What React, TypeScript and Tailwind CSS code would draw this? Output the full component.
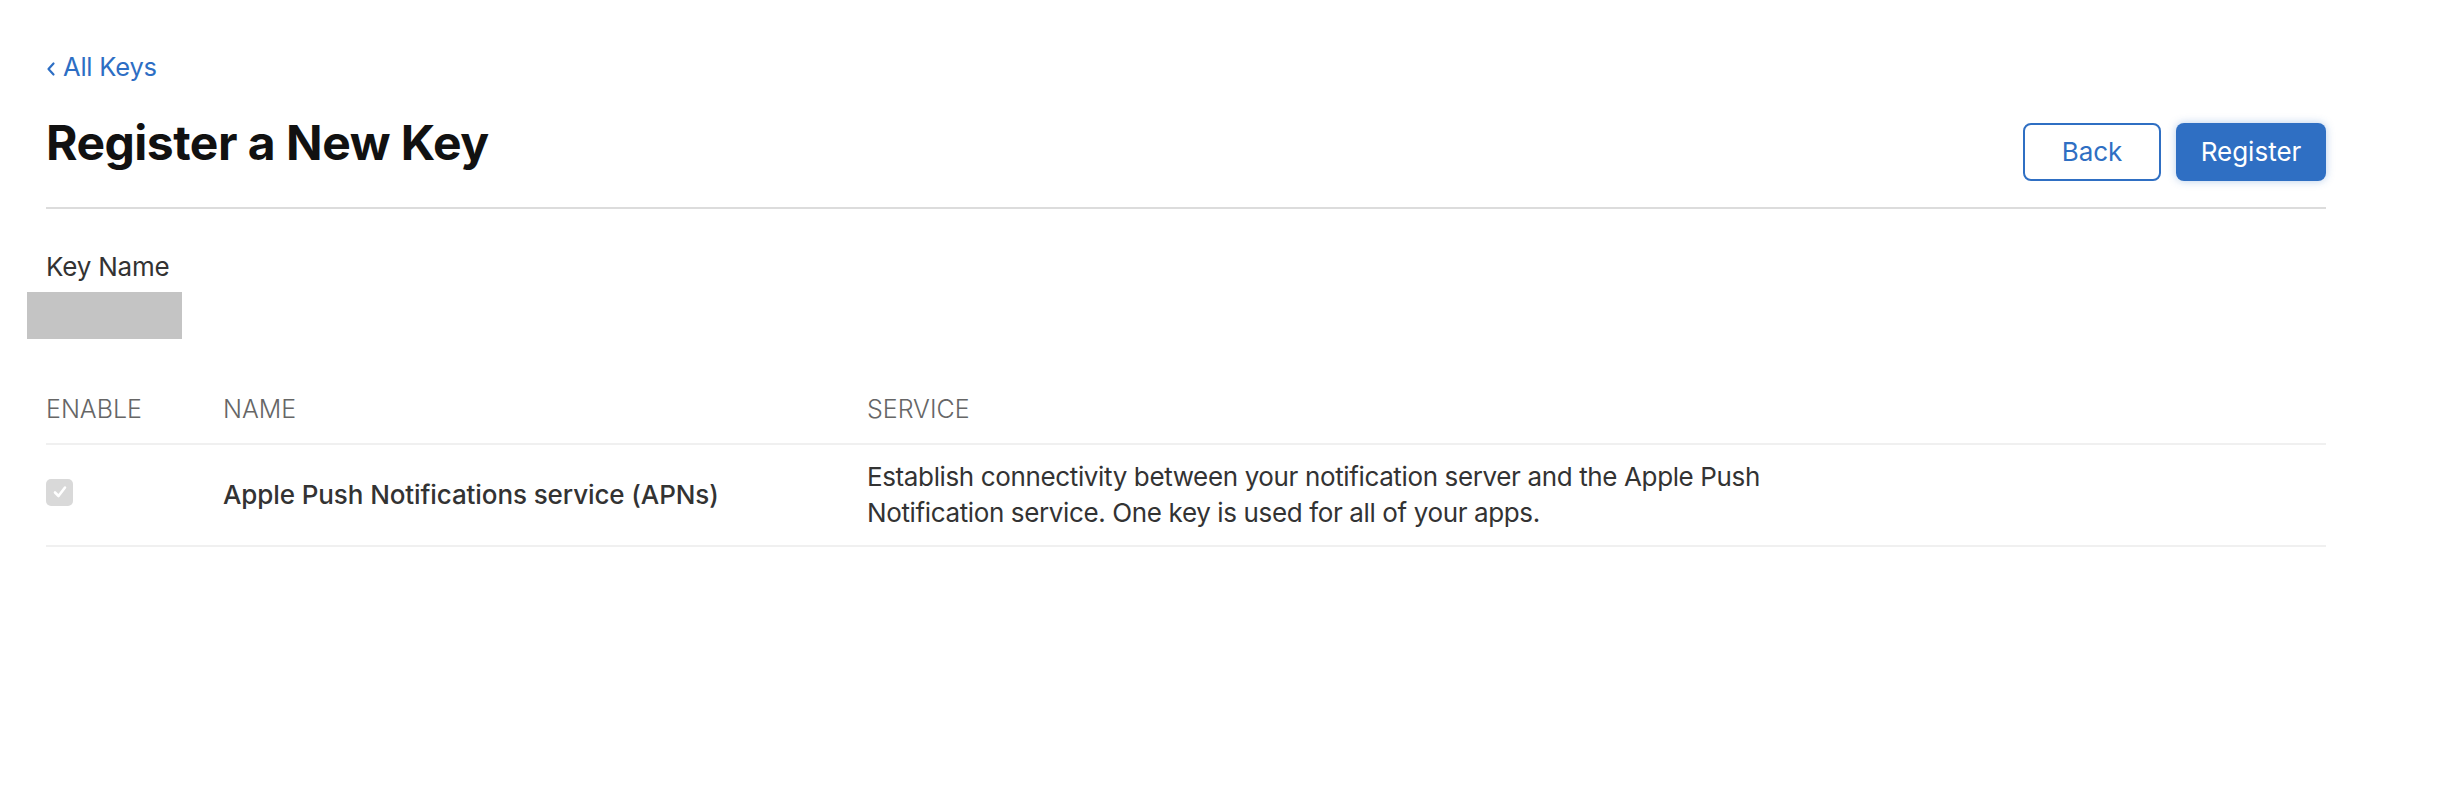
import React from "react";

export default function App() {
  return (
    <div className="min-h-[798px] w-full bg-white font-['Inter',_'Noto_Sans',_sans-serif] text-[#333]">
      <div className="ml-[46px] w-[2280px] pt-[49px]">
        <a className="flex h-[36px] items-center gap-[7px] text-[25.5px] leading-[36px] tracking-[-0.2px] text-[#2d6ec4]">
          <svg width="10" height="16" viewBox="0 0 10 16" className="mt-[3px]">
            <path d="M7.5 2.5 L2.5 8 L7.5 13.5" fill="none" stroke="#2d6ec4" strokeWidth="2.2" strokeLinecap="round" strokeLinejoin="round" />
          </svg>
          <span>All Keys</span>
        </a>

        <div className="mt-[30px] flex items-start justify-between">
          <h1 className="text-[48px] font-bold leading-[56px] tracking-[-0.5px] text-[#111]">Register a New Key</h1>
          <div className="mt-[8px] flex gap-[15px]">
            <button className="h-[58px] w-[138px] rounded-[8px] border-2 border-[#2f6fc3] bg-white pb-[2px] text-[26px] text-[#2f6fc3]">
              Back
            </button>
            <button className="h-[58px] w-[150px] rounded-[8px] bg-[#2f6fc3] pb-[2px] text-[26px] text-white shadow-[0_0_8px_rgba(47,111,195,0.35)]">
              Register
            </button>
          </div>
        </div>

        <div className="mt-[26px] h-[2px] w-full bg-[#dcdcdc]" />

        <div className="mt-[40px] text-[26px] leading-[36px] tracking-[-0.2px] text-[#333]">Key Name</div>
        <div className="ml-[-19px] mt-[7px] h-[47px] w-[155px] bg-[#c4c4c4]" />

        <div className="mt-[53px]">
          <div className="flex border-b-2 border-[#f0f0f0] pb-[17px] text-[25px] font-light leading-[34px] text-[#666]">
            <div className="w-[177px]">ENABLE</div>
            <div className="w-[644px]">NAME</div>
            <div>SERVICE</div>
          </div>
          <div className="flex items-center border-b-2 border-[#f0f0f0] py-[14px] text-[26px] leading-[36px]">
            <div className="w-[177px]">
              <div className="mb-[6px] flex h-[27px] w-[27px] items-center justify-center rounded-[5px] bg-[#d9d9d9]">
                <svg width="18" height="18" viewBox="0 0 18 18">
                  <path d="M4 9.5 L7.5 13 L14 4.5" fill="none" stroke="white" strokeWidth="2.6" strokeLinecap="round" strokeLinejoin="round" />
                </svg>
              </div>
            </div>
            <div className="w-[644px] font-medium tracking-[-0.1px] text-[#333]">Apple Push Notifications service (APNs)</div>
            <div className="tracking-[-0.37px] text-[#333]">
              Establish connectivity between your notification server and the Apple Push
              <br />
              Notification service. One key is used for all of your apps.
            </div>
          </div>
        </div>
      </div>
    </div>
  );
}
